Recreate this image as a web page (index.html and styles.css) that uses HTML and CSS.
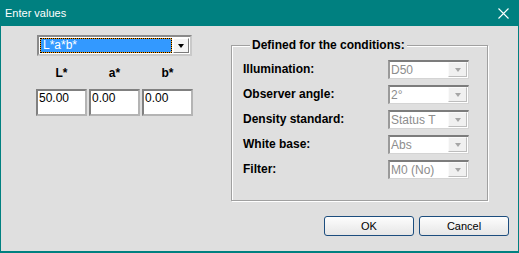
FILE: index.html
```html
<html>
<head>
  <title>Enter values</title>
  <link rel="stylesheet" href="styles.css">
</head>
<body>
  <div class="window">
    <!-- title bar -->
    <div class="titlebar">
      <span class="title">Enter values</span>
      <svg class="close" width="11" height="11" viewBox="0 0 11 11">
        <path d="M0.5 0.5 L10.5 10.5 M10.5 0.5 L0.5 10.5" stroke="#fff" stroke-width="1.1" fill="none"/>
      </svg>
    </div>
    <div class="client">
      <div class="top">
        <!-- colour space + values -->
        <div class="left">
          <div class="combo main">
            <span class="value">L*a*b*</span>
            <span class="drop"><i class="arrow"></i></span>
          </div>
          <div class="fields">
            <b>L*</b><b>a*</b><b>b*</b>
            <input type="text" value="50.00">
            <input type="text" value="0.00">
            <input type="text" value="0.00">
          </div>
        </div>
        <!-- conditions -->
        <fieldset class="conditions">
          <legend>Defined for the conditions:</legend>
          <div class="row">
            <label>Illumination:</label>
            <div class="combo disabled"><span class="value">D50</span><span class="drop"><i class="arrow"></i></span></div>
          </div>
          <div class="row">
            <label>Observer angle:</label>
            <div class="combo disabled"><span class="value">2°</span><span class="drop"><i class="arrow"></i></span></div>
          </div>
          <div class="row">
            <label>Density standard:</label>
            <div class="combo disabled"><span class="value">Status T</span><span class="drop"><i class="arrow"></i></span></div>
          </div>
          <div class="row">
            <label>White base:</label>
            <div class="combo disabled"><span class="value">Abs</span><span class="drop"><i class="arrow"></i></span></div>
          </div>
          <div class="row">
            <label>Filter:</label>
            <div class="combo disabled"><span class="value">M0 (No)</span><span class="drop"><i class="arrow"></i></span></div>
          </div>
        </fieldset>
      </div>
      <div class="buttons">
        <button>OK</button>
        <button>Cancel</button>
      </div>
    </div>
  </div>
</body>
</html>
```
FILE: styles.css
```css
body {
  margin: 0;
  font: 12px "Liberation Sans", Arial, sans-serif;
  color: #000;
}
.window {
  width: 519px;
  height: 253px;
  box-sizing: border-box;
  padding: 0 1px 2px;
  background: #008080;
  display: flex;
  flex-direction: column;
}
.titlebar {
  height: 26px;
  flex: none;
  display: flex;
  align-items: center;
  justify-content: space-between;
  padding: 0 9px 0 4px;
  color: #fff;
  font-size: 11px;
}
.close {
  display: block;
}
.client {
  flex: 1;
  background: #dfdfdf;
  display: flex;
  flex-direction: column;
}
.top {
  display: flex;
  align-items: flex-start;
  padding: 9px 0 0 35px;
}
.left {
  width: 157px;
  margin-right: 38px;
}

/* combo boxes */
.combo {
  display: flex;
  box-sizing: border-box;
  border: 2px solid;
  border-color: #8a8a8a #c9c9c9 #c9c9c9 #8a8a8a;
  background: #fff;
}
.combo .value {
  flex: 1;
  padding-left: 2px;
  white-space: nowrap;
  overflow: hidden;
}
.combo .drop {
  width: 16px;
  flex: none;
  box-sizing: border-box;
  display: flex;
  align-items: center;
  justify-content: center;
  background: #f4f4f4;
  border: 1px solid;
  border-color: #fff #7a7a7a #7a7a7a #fff;
}
.arrow {
  width: 0;
  height: 0;
  border-left: 3.5px solid transparent;
  border-right: 3.5px solid transparent;
  border-top: 4px solid #000;
}
.combo.main {
  margin-left: 1px;
  width: 155px;
  height: 21px;
  padding: 1px;
}
.combo.main .value {
  line-height: 13px;
  color: #fff;
  border: 1px dotted #000;
  background: linear-gradient(#3399ff, #3399ff) padding-box, #ff9900 border-box;
  margin-right: 1px;
}
.combo.disabled {
  width: 81px;
  height: 19px;
  color: #8d8d8d;
  border-width: 1px 1px 1px 2px;
  border-color: #7c7c7c #d4d4d4 #d4d4d4 #9a9a9a;
  border-top: 2px solid #7c7c7c;
}
.combo.disabled .value {
  line-height: 16px;
  padding-left: 1px;
}
.combo.disabled .drop {
  width: 19px;
  margin: 0 1px 1px 0;
  background: #f0f0f0;
  border-color: #fafafa #bdbdbd #bdbdbd #fafafa;
}
.combo.disabled .arrow {
  border-top-color: #a6a6a6;
}

/* value fields */
.fields {
  display: grid;
  grid-template-columns: repeat(3, 51px);
  column-gap: 2px;
  row-gap: 9px;
  margin-top: 10px;
}
.fields b {
  text-align: center;
  line-height: 14px;
}
.fields input {
  width: 51px;
  height: 27px;
  box-sizing: border-box;
  margin: 0;
  padding: 0 0 9px 1px;
  border: 2px solid;
  border-color: #808080 #b4b4b4 #b4b4b4 #808080;
  background: #fff;
  font: 12px "Liberation Sans", Arial, sans-serif;
}

/* conditions group */
.conditions {
  margin: 3px 0 0;
  padding: 5px 0 0 11px;
  width: 257px;
  height: 163px;
  box-sizing: border-box;
  border: 1px solid #a0a0a0;
  box-shadow: inset 1px 1px 0 #fff, 1px 1px 0 #fff;
}
.conditions legend {
  margin-left: 7px;
  padding: 0 2px;
  font-weight: bold;
  line-height: 14px;
  background: #dfdfdf;
}
.row {
  display: flex;
  align-items: center;
  height: 25px;
}
.row label {
  width: 145px;
  font-weight: bold;
  margin-top: -2px;
}

/* buttons */
.buttons {
  display: flex;
  justify-content: flex-end;
  gap: 5px;
  margin-top: 15px;
  padding-right: 9px;
}
.buttons button {
  width: 90px;
  height: 20px;
  padding: 0;
  border: 1px solid #1c4d7e;
  border-radius: 3px;
  background: linear-gradient(#fdfdfd, #e6e6e6);
  font: 11px "Liberation Sans", Arial, sans-serif;
  color: #000;
}
```
